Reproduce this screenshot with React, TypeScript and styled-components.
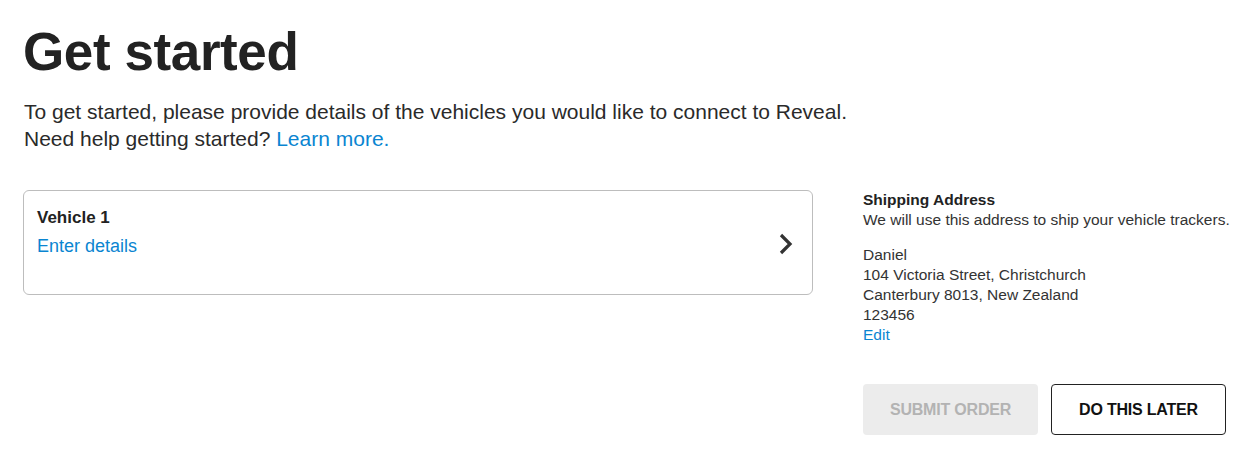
import React from "react";
import styled, { createGlobalStyle } from "styled-components";

const Global = createGlobalStyle`
  html, body { margin: 0; padding: 0; background: #fff; }
  body { font-family: "Liberation Sans", Arial, sans-serif; color: #222; }
`;

const Page = styled.main`
  padding: 20px 24px 0 23px;
`;

const Title = styled.h1`
  margin: 0;
  font-size: 53px;
  line-height: 64px;
  font-weight: 700;
  letter-spacing: -0.4px;
  color: #222;
`;

const Intro = styled.p`
  margin: 14px 0 0 1px;
  font-size: 21px;
  line-height: 27px;
  color: #2a2a2a;
`;

const Link = styled.a`
  color: #0a85d1;
  text-decoration: none;
  cursor: pointer;
`;

const Layout = styled.div`
  display: grid;
  grid-template-columns: 790px 1fr;
  column-gap: 50px;
  margin-top: 38px;
`;

const VehicleCard = styled.button`
  display: flex;
  width: 100%;
  align-items: flex-start;
  justify-content: space-between;
  height: 105px;
  padding: 16px 18px 0 13px;
  border: 1px solid #bdbdbd;
  border-radius: 6px;
  background: #fff;
  text-align: left;
  font-family: inherit;
  cursor: pointer;
`;

const CardText = styled.div`
  display: flex;
  flex-direction: column;
  gap: 6px;
`;

const CardTitle = styled.span`
  font-size: 17px;
  line-height: 22px;
  font-weight: 700;
  color: #222;
`;

const CardLink = styled.span`
  font-size: 18px;
  line-height: 22px;
  color: #0a85d1;
`;

const Chevron = styled.svg`
  margin-top: 26px;
  width: 16px;
  height: 22px;
`;

const Side = styled.aside`
  display: flex;
  flex-direction: column;
  font-size: 15.5px;
  line-height: 20px;
  color: #333;
`;

const SideTitle = styled.div`
  font-weight: 700;
  color: #222;
`;

const Address = styled.div`
  margin-top: 15px;
  display: flex;
  flex-direction: column;
`;

const Actions = styled.div`
  display: flex;
  gap: 13px;
  margin-top: 39px;
`;

const Button = styled.button<{ $variant: "disabled" | "outline" }>`
  width: 175px;
  height: 51px;
  font-family: inherit;
  font-size: 16px;
  font-weight: 700;
  letter-spacing: -0.2px;
  border-radius: 4px;
  cursor: ${(p) => (p.$variant === "disabled" ? "default" : "pointer")};
  background: ${(p) => (p.$variant === "disabled" ? "#ececec" : "#fff")};
  color: ${(p) => (p.$variant === "disabled" ? "#b3b3b3" : "#111")};
  border: ${(p) => (p.$variant === "disabled" ? "none" : "1px solid #222")};
`;

export default function App() {
  return (
    <>
      <Global />
      <Page>
        <Title>Get started</Title>
        <Intro>
          To get started, please provide details of the vehicles you would like to connect to Reveal.
          <br />
          Need help getting started? <Link>Learn more.</Link>
        </Intro>
        <Layout>
          <div>
            <VehicleCard>
              <CardText>
                <CardTitle>Vehicle 1</CardTitle>
                <CardLink>Enter details</CardLink>
              </CardText>
              <Chevron viewBox="0 0 16 22">
                <path d="M3 2 L12 11 L3 20" fill="none" stroke="#333" strokeWidth="3.2" />
              </Chevron>
            </VehicleCard>
          </div>
          <Side>
            <SideTitle>Shipping Address</SideTitle>
            <div>We will use this address to ship your vehicle trackers.</div>
            <Address>
              <span>Daniel</span>
              <span>104 Victoria Street, Christchurch</span>
              <span>Canterbury 8013, New Zealand</span>
              <span>123456</span>
              <Link>Edit</Link>
            </Address>
            <Actions>
              <Button $variant="disabled" disabled>SUBMIT ORDER</Button>
              <Button $variant="outline">DO THIS LATER</Button>
            </Actions>
          </Side>
        </Layout>
      </Page>
    </>
  );
}
